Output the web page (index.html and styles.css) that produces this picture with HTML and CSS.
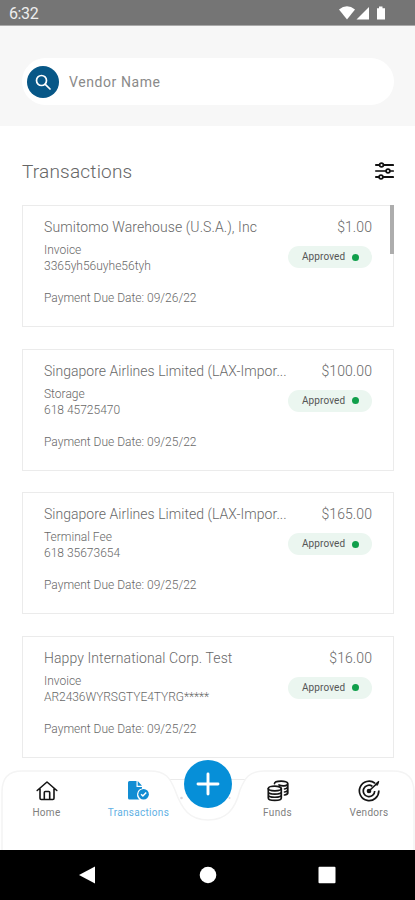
FILE: index.html
```html
<!DOCTYPE html>
<html lang="en">
<head>
<meta charset="utf-8">
<title>Transactions</title>
<link rel="stylesheet" href="styles.css">
</head>
<body>
<div class="phone">
  <header class="status">
    <span class="clock">6:32</span>
    <svg class="signals" width="48" height="16" viewBox="0 0 48 16" fill="#fff"><path d="M0 4.600Q8 -2 16 4.600L8 14.500Z"/><path d="M30 2V14.500H17.500Z"/><path d="M38 3.200h2V1.500h3.500v1.700H46v11.300h-8Z"/></svg>
  </header>
  <section class="search-area">
    <div class="search">
      <span class="search-btn"><svg width="16" height="16" viewBox="0 0 16 16" fill="none" stroke="#fff" stroke-width="1.700" stroke-linecap="round"><circle cx="6.500" cy="6.500" r="5"/><path d="M10.300 10.300L15 15"/></svg></span>
      <span class="placeholder">Vendor Name</span>
    </div>
  </section>
  <main class="content">
    <div class="heading">
      <h1>Transactions</h1>
      <svg width="20" height="20" viewBox="0 0 20 20" fill="#fff" stroke="#111" stroke-width="2.100" stroke-linecap="round"><path d="M2 4H19M2 16H19"/><path d="M2 10H19" stroke="#444"/><circle cx="7.500" cy="4" r="1.900" stroke-width="1.700"/><circle cx="14" cy="10" r="1.900" stroke-width="1.700"/><circle cx="7" cy="16" r="1.900" stroke-width="1.700"/></svg>
    </div>
    <div class="list">
      <article class="card">
        <div class="row"><h2>Sumitomo Warehouse (U.S.A.), Inc</h2><span class="amount">$1.00</span></div>
        <div class="row detail"><p>Invoice<br>3365yh56uyhe56tyh</p><span class="badge">Approved<i></i></span></div>
        <p class="due">Payment Due Date: 09/26/22</p>
      </article>
      <article class="card">
        <div class="row"><h2 class="clipped">Singapore Airlines Limited (LAX-Impor...</h2><span class="amount">$100.00</span></div>
        <div class="row detail"><p>Storage<br>618 45725470</p><span class="badge">Approved<i></i></span></div>
        <p class="due">Payment Due Date: 09/25/22</p>
      </article>
      <article class="card">
        <div class="row"><h2 class="clipped">Singapore Airlines Limited (LAX-Impor...</h2><span class="amount">$165.00</span></div>
        <div class="row detail"><p>Terminal Fee<br>618 35673654</p><span class="badge">Approved<i></i></span></div>
        <p class="due">Payment Due Date: 09/25/22</p>
      </article>
      <article class="card">
        <div class="row"><h2>Happy International Corp. Test</h2><span class="amount">$16.00</span></div>
        <div class="row detail"><p>Invoice<br><span class="ref">AR2436WYRSGTYE4TYRG*****</span></p><span class="badge">Approved<i></i></span></div>
        <p class="due">Payment Due Date: 09/25/22</p>
      </article>
      <article class="card"></article>
      <span class="scrollbar"></span>
    </div>
    <nav class="tabs">
      <svg class="tabs-shape" width="415" height="80" viewBox="0 0 415 80"><path d="M2 82V22Q2 1 22 1H150C166 1 170 8 175 20C182 40 190 50 208 50C226 50 235 40 240 20C245 8 249 1 264 1H393Q414 1 414 22V82Z" fill="#fff" stroke="#f4f4f4" stroke-width="1.500"/><circle cx="181.500" cy="28" r="1.300" fill="#ddd5da"/><circle cx="229.500" cy="28" r="1" fill="#ddd5da"/></svg>
      <a class="tab"><svg width="22" height="22" viewBox="0 0 22 22" fill="none" stroke="#151515" stroke-width="1.600" stroke-linejoin="round" stroke-linecap="round"><path d="M1.200 10.500L11 2L20.800 10.500M4 8.800V18.300Q4 19.500 5.200 19.500H16.800Q18 19.500 18 18.300V8.800M8.300 19V12.500Q8.300 11.500 9.300 11.500H12.700Q13.700 11.500 13.700 12.500V19"/></svg><span>Home</span></a>
      <a class="tab active"><svg width="22" height="22" viewBox="0 0 22 22"><path d="M0 2.500Q0 1 1.500 1H8.500V7H14V8.500A6.200 6.200 0 0 0 11.500 19.500H1.500Q0 19.500 0 18ZM9.700 1L14 5.800H9.700Z" fill="#128dd3"/><circle cx="15.600" cy="14.300" r="5.300" fill="#128dd3"/><path d="M13.100 14.200L14.900 16L18.200 12.500" fill="none" stroke="#fff" stroke-width="1.500"/></svg><span>Transactions</span></a>
      <a class="fab"><svg width="24" height="24" viewBox="0 0 24 24" stroke="#fff" stroke-width="2.900" stroke-linecap="round"><path d="M12 2V22M2 12H22"/></svg></a>
      <a class="tab"><svg width="22" height="22" viewBox="0 0 22 22" fill="none" stroke="#151515" stroke-width="1.700" stroke-linecap="round"><ellipse cx="7.800" cy="8.500" rx="6.500" ry="2.300"/><path d="M1.300 8.500V18C1.300 21.200 14.300 21.200 14.300 18V8.500M1.300 11.700C1.300 14.800 14.300 14.800 14.300 11.700M1.300 15C1.300 18 14.300 18 14.300 15M7.500 3.600C7.500 .3 20.800 .3 20.800 3.500S14 6 12 5M20.800 3.500V13Q20.500 14.500 17.500 15M20.800 6.800Q20 8.800 17.500 9M20.800 10Q20 11.800 17.500 12"/></svg><span>Funds</span></a>
      <a class="tab"><svg width="22" height="22" viewBox="0 0 22 22" fill="none" stroke="#151515" stroke-width="1.700"><path d="M17 3.200A9.700 9.700 0 1 0 20.800 10.500M14.300 6.300A5.700 5.700 0 1 0 16.700 11M11 11L20.500 2"/><path d="M17 4.500L20.800 1.200L19.500 5.200Z" fill="#151515" stroke-width="1"/><circle cx="11" cy="11" r="1.500" fill="#151515"/></svg><span>Vendors</span></a>
    </nav>
  </main>
  <footer class="system">
    <svg width="18" height="18" viewBox="0 0 18 18" fill="#fff"><path d="M0 9L16 .5V17.500Z"/></svg>
    <svg width="18" height="18" viewBox="0 0 18 18" fill="#fff"><circle cx="9" cy="9" r="8.300"/></svg>
    <svg width="18" height="18" viewBox="0 0 18 18" fill="#fff"><rect x=".5" y=".7" width="17" height="16.600" rx="1"/></svg>
  </footer>
</div>
</body>
</html>
```
FILE: styles.css
```css
* { box-sizing: border-box; }
body { margin: 0; font-family: Roboto, "Liberation Sans", sans-serif; background: #fff; color: #777; }
h1, h2, p { margin: 0; }
.phone { width: 415px; height: 900px; display: flex; flex-direction: column; overflow: hidden; }
.status { height: 26px; flex: none; background: #757575; border-bottom: 1px solid #aaa; display: flex; justify-content: space-between; padding: 5px 28px 0 9px; color: #eee; }
.clock { font-size: 16px; line-height: 18px; letter-spacing: -.4px; }
.search-area { height: 100px; flex: none; background: #f7f7f7; padding: 32px 21px 0 22px; }
.search { height: 47px; border-radius: 24px; background: #fff; display: flex; align-items: center; padding-left: 5px; }
.search-btn { width: 32px; height: 32px; border-radius: 50%; background: #075787; display: flex; align-items: center; justify-content: center; }
.placeholder { font-size: 14px; line-height: 20px; margin-left: 10px; letter-spacing: .58px; color: #8a8a8a; }
.content { flex: 1; min-height: 0; position: relative; overflow: hidden; padding: 0 21px 0 22px; }
.heading { height: 79px; display: flex; justify-content: space-between; align-items: flex-start; padding-top: 34px; }
.heading h1 { font-size: 19px; line-height: 24px; letter-spacing: .2px; font-weight: 300; color: #666; }
.heading svg { margin-top: 1px; }
.list { position: relative; display: flex; flex-direction: column; gap: 21.5px; }
.card { height: 122px; flex: none; border: 1.5px solid #ebebeb; padding: 11px 21px 0 21px; background: #fff; }
.row { display: flex; justify-content: space-between; }
h2, .amount { font-size: 14px; line-height: 20px; letter-spacing: .09px; font-weight: 300; color: #686868; white-space: nowrap; }
.clipped { letter-spacing: .03px; }
.detail { margin-top: 5px; font-size: 12px; line-height: 16px; height: 32px; }
.detail p, .due { font-weight: 300; color: #686868; }
.detail .ref { letter-spacing: -.05px; }
.badge { width: 84px; height: 22px; border-radius: 11px; background: #ebf6f0; color: #555; font-size: 10px; line-height: 20px; display: flex; align-items: center; padding-left: 14px; letter-spacing: .1px; margin-top: 4px; }
.badge i { width: 7px; height: 7px; border-radius: 50%; background: #109f4b; margin-left: 7px; }
.due { margin-top: 16px; font-size: 12px; line-height: 16px; }
.scrollbar { position: absolute; right: 0; top: 0; width: 4px; height: 49px; background: #adadad; }
.tabs { position: absolute; left: 0; bottom: 0; width: 415px; height: 80px; display: grid; grid-template-columns: 93px 91px 48px 91px 92px; }
.tabs-shape { position: absolute; left: 0; top: 0; }
.tab { position: relative; display: flex; flex-direction: column; align-items: center; padding-top: 10px; font-size: 10px; line-height: 13px; letter-spacing: .3px; color: #808080; }
.tab span { margin-top: 4px; }
.active { color: #5fb0e4; }
.fab { position: relative; width: 48px; height: 48px; border-radius: 50%; background: #068fd8; margin-top: -10px; display: flex; align-items: center; justify-content: center; }
.system { height: 50px; flex: none; background: #000; display: flex; align-items: center; justify-content: space-between; padding: 0 79px; }
```
